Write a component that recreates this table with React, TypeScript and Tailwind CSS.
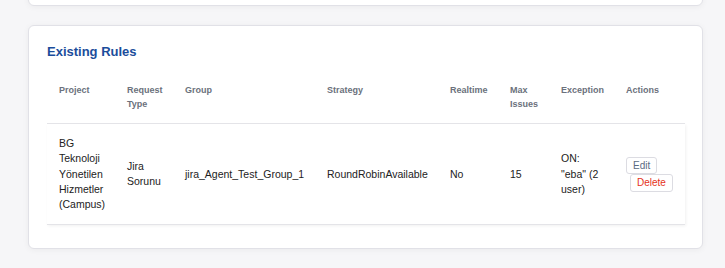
import React from 'react';

const headers = [
  { label: 'Project', w: 'w-[68px]' },
  { label: 'Request Type', w: 'w-[58px]' },
  { label: 'Group', w: 'w-[142px]' },
  { label: 'Strategy', w: 'w-[123px]' },
  { label: 'Realtime', w: 'w-[60px]' },
  { label: 'Max Issues', w: 'w-[51px]' },
  { label: 'Exception', w: 'w-[65px]' },
  { label: 'Actions', w: 'w-[71px]' },
];

const rules = [
  {
    project: 'BG Teknoloji Yönetilen Hizmetler (Campus)',
    requestType: 'Jira Sorunu',
    group: 'jira_Agent_Test_Group_1',
    strategy: 'RoundRobinAvailable',
    realtime: 'No',
    maxIssues: 15,
    exception: 'ON: "eba" (2 user)',
  },
];

export default function App() {
  return (
    <div className="min-h-[268px] bg-[#f6f6f8] overflow-hidden font-['Liberation_Sans',Arial,sans-serif]">
      <div className="ml-[28px] w-[675px] h-[26px] -mt-[20px] bg-white border border-[#e1e1e7] rounded-[6px] shadow-[0_1px_6px_rgba(0,0,0,0.05)]" />

      <div className="ml-[28px] mt-[19px] w-[675px] bg-white border border-[#e1e1e7] rounded-[6px] shadow-[0_1px_6px_rgba(0,0,0,0.05)] px-[18px] pt-[19px] pb-[23px]">
        <h2 className="text-[13px] leading-[14px] font-bold text-[#1b4d9b]">Existing Rules</h2>

        <table className="mt-[12px] w-[638px] table-fixed border-collapse">
          <thead>
            <tr className="border-b border-[#e4e4e8]">
              {headers.map((h) => (
                <th
                  key={h.label}
                  className={`${h.w} px-[12px] pt-[12px] pb-[12px] align-top text-left text-[9px] leading-[14px] font-bold text-[#6b717c]`}
                >
                  {h.label}
                </th>
              ))}
            </tr>
          </thead>
          <tbody>
            {rules.map((r) => (
              <tr
                key={r.group}
                className="border-b border-[#e4e4e8] shadow-[1px_1px_3px_rgba(0,0,0,0.06)] text-[10.5px] leading-[15.3px] text-[#222]"
              >
                <td className="px-[12px] py-[12px] align-middle">{r.project}</td>
                <td className="px-[12px] py-[12px] align-middle">{r.requestType}</td>
                <td className="px-[12px] py-[12px] align-middle">{r.group}</td>
                <td className="px-[12px] py-[12px] align-middle">{r.strategy}</td>
                <td className="px-[12px] py-[12px] align-middle">{r.realtime}</td>
                <td className="px-[12px] py-[12px] align-middle">{r.maxIssues}</td>
                <td className="px-[12px] py-[12px] align-middle">{r.exception}</td>
                <td className="px-[12px] py-[12px] align-middle">
                  <div className="flex flex-col items-start">
                    <button className="h-[17px] px-[6px] bg-white border border-[#dcdce2] rounded-[3px] text-[10px] leading-[15px] text-[#5b6b82]">
                      Edit
                    </button>
                    <button className="ml-[4px] h-[18px] px-[6px] bg-white border border-[#dcdce2] rounded-[3px] text-[10px] leading-[16px] text-[#e5321b]">
                      Delete
                    </button>
                  </div>
                </td>
              </tr>
            ))}
          </tbody>
        </table>
      </div>
    </div>
  );
}
